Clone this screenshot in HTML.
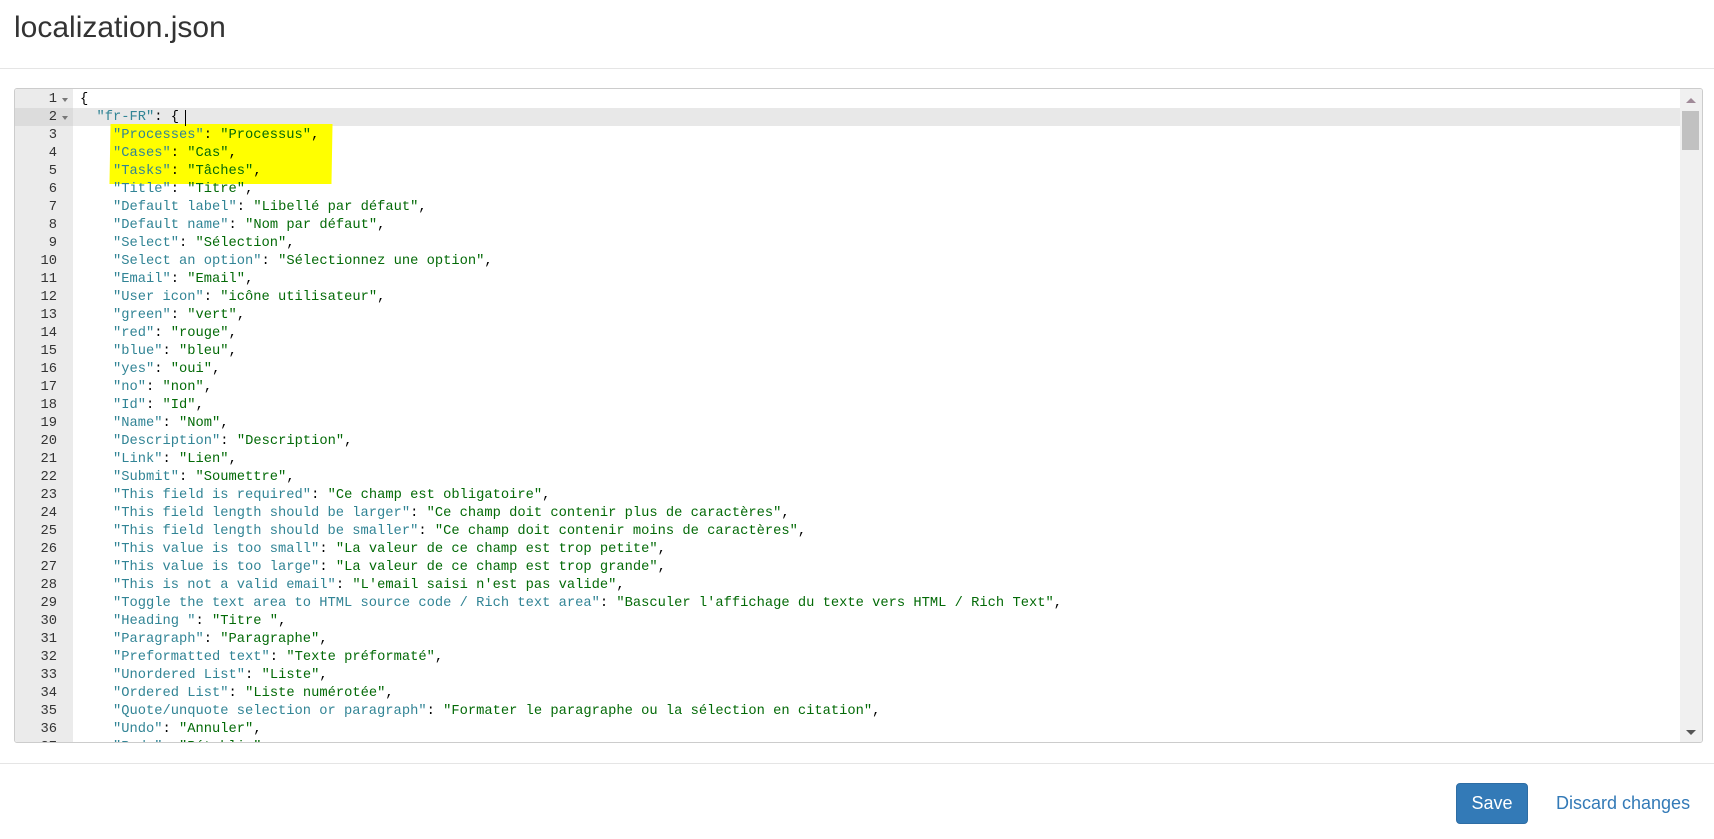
<!DOCTYPE html>
<html><head><meta charset="utf-8"><style>
body{margin:0;width:1714px;height:839px;background:#fff;position:relative;overflow:hidden;font-family:"Liberation Sans",sans-serif}
h1{position:absolute;left:14px;top:8px;margin:0;font-weight:400;font-size:30px;color:#333;line-height:40px}
.hr1{position:absolute;left:0;right:0;top:68px;border-top:1px solid #e5e5e5}
.hr2{position:absolute;left:0;right:0;top:763px;border-top:1px solid #e5e5e5}
.ed{position:absolute;left:14px;top:88px;width:1687px;height:653px;border:1px solid #ccc;border-radius:3px;overflow:hidden}
.gut{position:absolute;left:0;top:0;width:58px;height:100%;background:#ebebeb}
.band{position:absolute;top:19px;height:18px;background:#e8e8e8;left:58px;right:0}
.gband{position:absolute;top:19px;height:18px;background:#dcdcdc;left:0;width:58px}
.hl{position:absolute;left:95px;top:35px;width:222px;height:60px;background:#ffff00;transform:skewX(-1deg)}
.lines{position:absolute;left:0;top:2px;font-family:"Liberation Mono",monospace;font-size:13.75px;line-height:18px;white-space:pre}
.ln{position:absolute;left:0;width:42px;text-align:right;color:#333}
.tx{position:absolute;left:65px;color:#000}
.k{color:#318495}.s{color:#036a07}
.fold{position:absolute;left:47px;width:0;height:0;border-left:3px solid transparent;border-right:3px solid transparent;border-top:4px solid #777}
.sb{position:absolute;right:0;top:0;width:22px;height:100%;background:#f0f0f0}
.thumb{position:absolute;left:2px;top:22px;width:17px;height:39px;background:#c1c1c1}
.cur{position:absolute;left:170px;top:21px;width:1px;height:16px;background:#000}
.btn{position:absolute;left:1456px;top:783px;width:72px;height:41px;background:#337ab7;border:1px solid #2e6da4;border-radius:4px;box-sizing:border-box;color:#fff;font-size:18px;text-align:center;line-height:39px}
.dc{position:absolute;left:1556px;top:783px;line-height:41px;font-size:18px;color:#337ab7}
</style></head><body>
<h1>localization.json</h1>
<div class="hr1"></div>
<div class="ed">
<div class="gut"></div><div class="gband"></div><div class="band"></div>
<div class="hl"></div>
<div class="lines" id="L"></div>
<div class="cur"></div>
<div class="sb"><div style="position:absolute;left:6px;top:9px;border-left:5px solid transparent;border-right:5px solid transparent;border-bottom:5px solid #a08a98"></div><div class="thumb"></div><div style="position:absolute;left:6px;bottom:7px;border-left:5px solid transparent;border-right:5px solid transparent;border-top:5px solid #555"></div></div>
</div>
<div class="hr2"></div>
<div class="btn">Save</div>
<div class="dc">Discard changes</div>
<script>
var d=[["Processes","Processus"],["Cases","Cas"],["Tasks","Tâches"],["Title","Titre"],["Default label","Libellé par défaut"],["Default name","Nom par défaut"],["Select","Sélection"],["Select an option","Sélectionnez une option"],["Email","Email"],["User icon","icône utilisateur"],["green","vert"],["red","rouge"],["blue","bleu"],["yes","oui"],["no","non"],["Id","Id"],["Name","Nom"],["Description","Description"],["Link","Lien"],["Submit","Soumettre"],["This field is required","Ce champ est obligatoire"],["This field length should be larger","Ce champ doit contenir plus de caractères"],["This field length should be smaller","Ce champ doit contenir moins de caractères"],["This value is too small","La valeur de ce champ est trop petite"],["This value is too large","La valeur de ce champ est trop grande"],["This is not a valid email","L'email saisi n'est pas valide"],["Toggle the text area to HTML source code / Rich text area","Basculer l'affichage du texte vers HTML / Rich Text"],["Heading ","Titre "],["Paragraph","Paragraphe"],["Preformatted text","Texte préformaté"],["Unordered List","Liste"],["Ordered List","Liste numérotée"],["Quote/unquote selection or paragraph","Formater le paragraphe ou la sélection en citation"],["Undo","Annuler"],["Redo","Rétablir"]];
var h="";function e(s){return s.replace(/&/g,"&amp;").replace(/</g,"&lt;")}
function row(i,t){h+='<div class="ln" style="top:'+(i*18)+'px">'+(i+1)+'</div><div class="tx" style="top:'+(i*18)+'px">'+t+'</div>';}
row(0,'{');row(1,'  <span class="k">"fr-FR"</span>: {');
h+='<div class="fold" style="top:7px"></div><div class="fold" style="top:25px"></div>';
d.forEach(function(p,j){row(j+2,'    <span class="k">"'+e(p[0])+'"</span>: <span class="s">"'+e(p[1])+'"</span>,');});
document.getElementById("L").innerHTML=h;
</script>
</body></html>
